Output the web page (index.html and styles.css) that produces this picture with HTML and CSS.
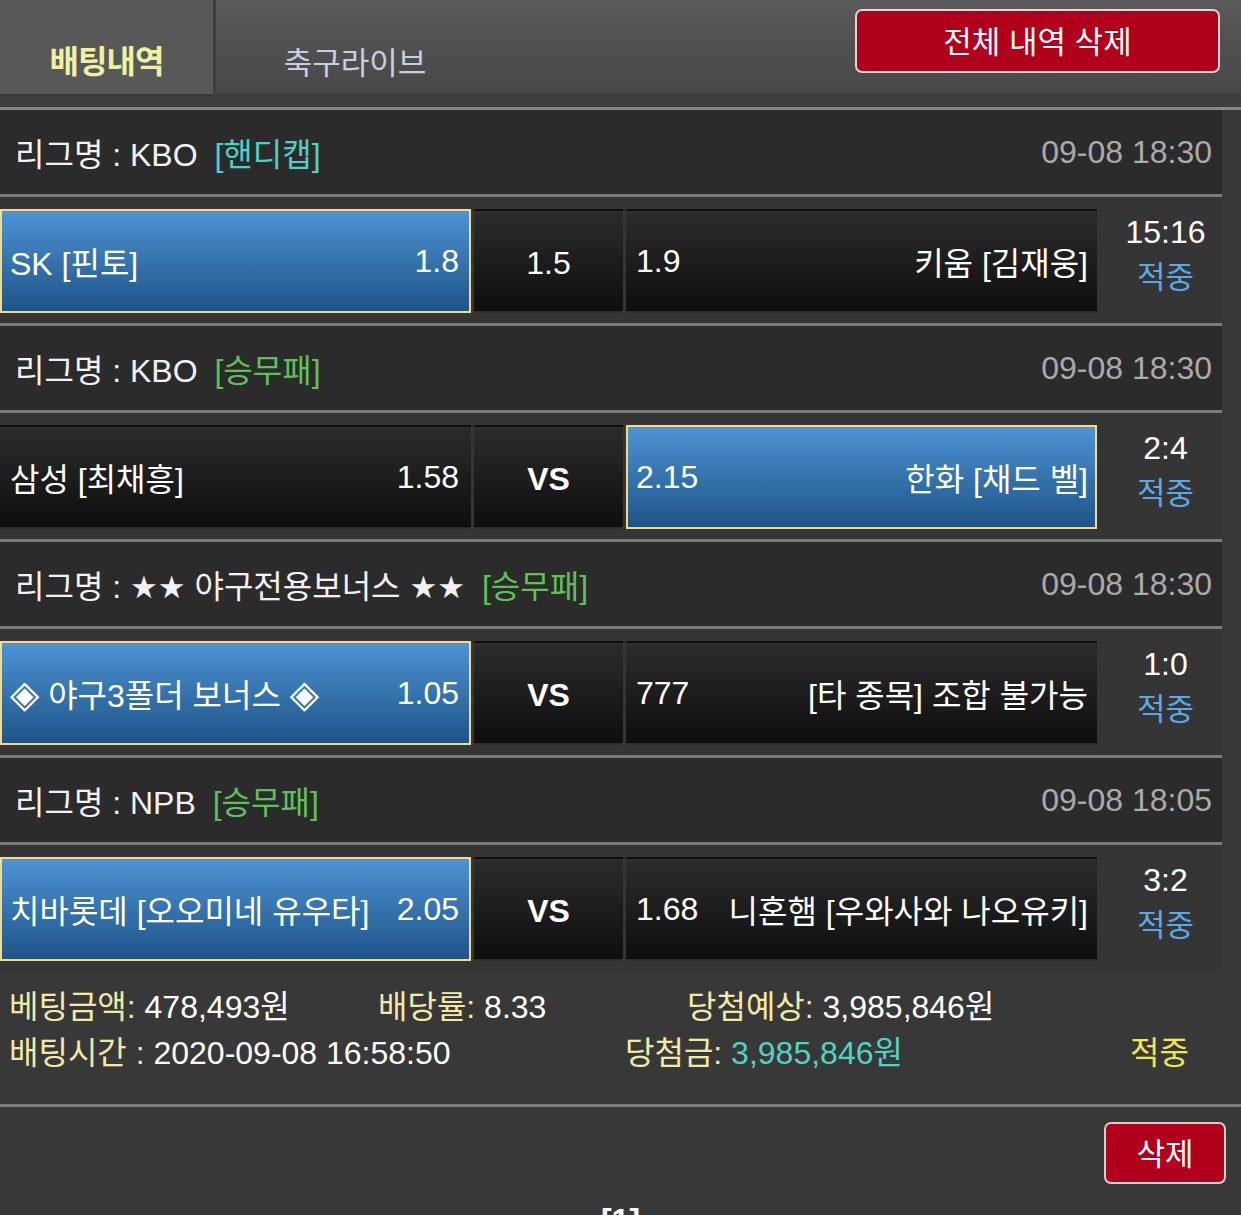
FILE: index.html
```html
<!DOCTYPE html>
<html lang="ko">
<head>
<meta charset="utf-8">
<title>배팅내역</title>
<link rel="stylesheet" href="styles.css">
</head>
<body>
<div class="top">
  <div class="tabs">
    <div class="tab active">배팅내역</div>
    <div class="tab">축구라이브</div>
  </div>
  <button class="btn-delall">전체 내역 삭제</button>
</div>

<div class="bets">
  <div class="league">
    <span class="lname">리그명 : KBO <span class="type hcp">[핸디캡]</span></span>
    <span class="ldate">09-08 18:30</span>
  </div>
  <div class="match">
    <div class="cell side sel"><span>SK [핀토]</span><span>1.8</span></div>
    <div class="cell mid">1.5</div>
    <div class="cell side right"><span>1.9</span><span>키움 [김재웅]</span></div>
    <div class="score"><span class="sc">15:16</span><span class="res">적중</span></div>
  </div>

  <div class="league">
    <span class="lname">리그명 : KBO <span class="type wdl">[승무패]</span></span>
    <span class="ldate">09-08 18:30</span>
  </div>
  <div class="match">
    <div class="cell side"><span>삼성 [최채흥]</span><span>1.58</span></div>
    <div class="cell mid vs">VS</div>
    <div class="cell side right sel"><span>2.15</span><span>한화 [채드 벨]</span></div>
    <div class="score"><span class="sc">2:4</span><span class="res">적중</span></div>
  </div>

  <div class="league">
    <span class="lname">리그명 : <span class="sym">★★</span> 야구전용보너스 <span class="sym">★★</span> <span class="type wdl">[승무패]</span></span>
    <span class="ldate">09-08 18:30</span>
  </div>
  <div class="match">
    <div class="cell side sel"><span><span class="dia">◈</span> 야구3폴더 보너스 <span class="dia">◈</span></span><span>1.05</span></div>
    <div class="cell mid vs">VS</div>
    <div class="cell side right"><span>777</span><span>[타 종목] 조합 불가능</span></div>
    <div class="score"><span class="sc">1:0</span><span class="res">적중</span></div>
  </div>

  <div class="league">
    <span class="lname">리그명 : NPB <span class="type wdl">[승무패]</span></span>
    <span class="ldate">09-08 18:05</span>
  </div>
  <div class="match last">
    <div class="cell side sel"><span>치바롯데 [오오미네 유우타]</span><span>2.05</span></div>
    <div class="cell mid vs">VS</div>
    <div class="cell side right"><span>1.68</span><span>니혼햄 [우와사와 나오유키]</span></div>
    <div class="score"><span class="sc">3:2</span><span class="res">적중</span></div>
  </div>
</div>

<div class="summary">
  <div class="srow">
    <div class="s1"><span class="lbl">베팅금액:</span> 478,493원</div>
    <div class="s2"><span class="lbl">배당률:</span> 8.33</div>
    <div class="s3"><span class="lbl">당첨예상:</span> 3,985,846원</div>
  </div>
  <div class="srow">
    <div class="s1b"><span class="lbl">배팅시간 :</span> 2020-09-08 16:58:50</div>
    <div class="s2b"><span class="lbl">당첨금:</span> <span class="win">3,985,846원</span></div>
    <div class="s3b hit">적중</div>
  </div>
</div>

<div class="actions">
  <button class="btn-del">삭제</button>
</div>

<div class="pager">[1]</div>
</body>
</html>
```

FILE: styles.css
```css
* { box-sizing: border-box; }
html, body { margin: 0; padding: 0; }
body {
  background: #383838;
  color: #fff;
  font-family: "Liberation Sans", "Noto Sans CJK KR", sans-serif;
  width: 1241px;
  overflow: hidden;
}

.top {
  position: relative;
  height: 110px;
  background: linear-gradient(#5a5a5a, #474747 88%, #3e3e3e 88%, #3e3e3e);
  border-bottom: 3px solid #868686;
}
.tabs { display: flex; height: 97px; }
.tab {
  display: flex;
  align-items: center;
  justify-content: center;
  width: 278px;
  height: 97px;
  padding-top: 24px;
  font-size: 31px;
  color: #c9cede;
}
.tab.active {
  width: 216px;
  background: #585858;
  border-right: 3px solid #3f3f3f;
  border-bottom: 3px solid #3a3a3a;
  color: #eef0a4;
  font-weight: bold;
  font-size: 32px;
  letter-spacing: -1px;
}
.btn-delall {
  position: absolute;
  top: 9px;
  right: 21px;
  width: 365px;
  height: 64px;
  background: #b0001c;
  border: 2px solid #d8d8d8;
  border-radius: 7px;
  color: #fff;
  font-family: "Liberation Sans", "Noto Sans CJK KR", sans-serif;
  font-size: 31px;
  padding: 0 0 4px;
}

.bets { width: 1222px; }
.league {
  display: flex;
  justify-content: space-between;
  align-items: center;
  height: 87px;
  background: #2b2b2b;
  border-bottom: 3px solid #7c7c7c;
  padding: 0 10px 0 15px;
  font-size: 32px;
}
.lname { color: #f2f2f2; }
.sym { font-family: "DejaVu Sans", sans-serif; font-size: 31px; }
.dia { font-family: "DejaVu Sans", sans-serif; font-size: 38px; line-height: 1; }
.type { margin-left: 8px; }
.hcp { color: #4fd0c6; }
.wdl { color: #5fc05a; }
.ldate { color: #aaaaaa; }

.match {
  display: flex;
  align-items: flex-start;
  height: 129px;
  padding-top: 12px;
  background: #353535;
  border-bottom: 3px solid #7c7c7c;
}
.match.last { border-bottom: 0; height: 126px; }
.cell {
  height: 104px;
  display: flex;
  align-items: center;
  font-size: 32px;
  color: #fff;
  background: linear-gradient(#2c2c2c, #0e0e0e);
  border: 2px solid transparent;
}
.side {
  width: 471px;
  justify-content: space-between;
  padding: 0 10px 0 8px;
}
.side.right { padding-right: 7px; }
.cell.sel {
  background: linear-gradient(#4d93d3, #1e5488);
  border-color: #f3d98a;
}
.mid {
  width: 149px;
  margin: 0 3px;
  justify-content: center;
  padding-top: 4px;
}
.mid.vs { font-weight: bold; }
.score {
  width: 125px;
  display: flex;
  flex-direction: column;
  align-items: center;
  line-height: 46px;
  padding-left: 12px;
}
.sc { font-size: 32px; }
.res { font-size: 31px; color: #5aa9e6; }

.summary {
  padding: 13px 0 28px 9px;
  border-bottom: 3px solid #7c7c7c;
  font-size: 32px;
  line-height: 46px;
}
.srow { display: flex; }
.lbl { color: #f0eaa6; }
.s1 { width: 369px; }
.s2 { width: 309px; }
.s1b { width: 616px; }
.s2b { width: 505px; }
.win { color: #4fd4c4; }
.hit { color: #f0e64e; }

.actions {
  display: flex;
  justify-content: flex-end;
  padding: 15px 15px 0 0;
}
.btn-del {
  width: 122px;
  height: 62px;
  background: #b0001c;
  border: 2px solid #d0d0d0;
  border-radius: 7px;
  color: #fff;
  font-family: "Liberation Sans", "Noto Sans CJK KR", sans-serif;
  font-size: 31px;
  padding: 0 0 4px;
}
.pager {
  text-align: center;
  font-weight: bold;
  font-size: 32px;
  margin-top: 18px;
}
```
